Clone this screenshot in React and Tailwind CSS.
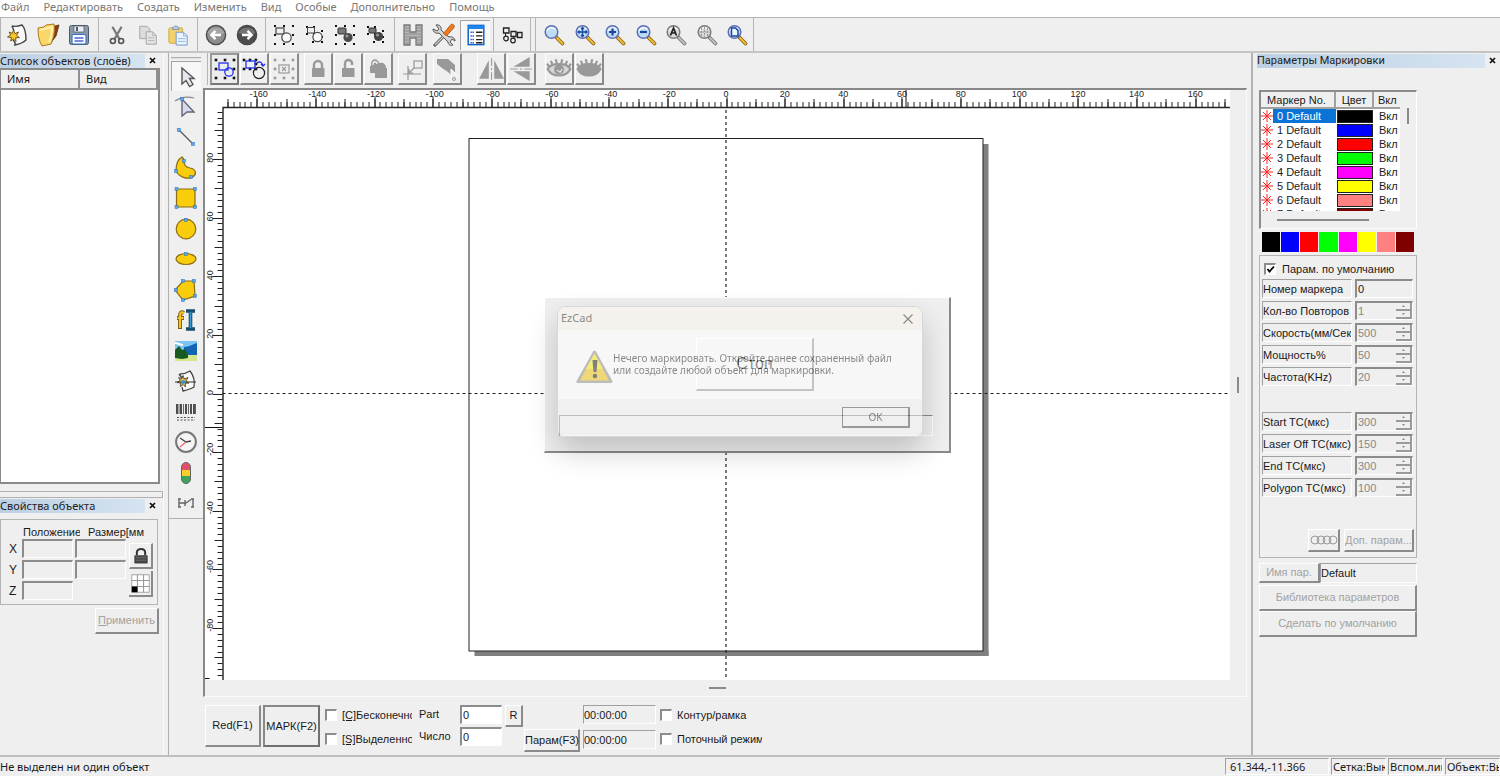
import React from "react";

const sans = "font-['Liberation_Sans','Noto_Sans',sans-serif]";
const ui = "font-['Noto_Sans','Open_Sans',sans-serif]";
const raised = "border-t border-l border-t-white border-l-white border-b-2 border-r-2 border-b-[#8a8a8a] border-r-[#8a8a8a] bg-[#efefef]";
const sunken = "border-t-2 border-l-2 border-t-[#8c8c8c] border-l-[#8c8c8c] border-b border-r border-b-white border-r-white";
const thin = "border-t border-l border-t-[#a0a0a0] border-l-[#a0a0a0] border-b border-r border-b-white border-r-white";

function Svg({ size = 24, children }) {
  return (
    <svg width={size} height={size} viewBox="0 0 24 24" fill="none" aria-hidden="true">
      {children}
    </svg>
  );
}

/* ---------- main toolbar icons ---------- */
const STAR = "M0-6 1.4-2.4 5-4 3-.6 6 1.6 2.2 1.8 2.4 5.4 0 3-2.8 5-2 1.6-6 1-2.8-1-4.4-4-1.2-2.6Z";
const NewIcon = () => (
  <Svg>
    <path d="M7 3C11 4 14 3 17 2c3 3 4 8 4 15-2 2-6 4-11 5 1-3-1-4-2-5" fill="#fafafa" stroke="#444" strokeWidth="1.4" />
    <path d="M7 3 9 8" stroke="#444" strokeWidth="1.4" />
    <path transform="translate(8.5 13)" d={STAR} fill="#f7c52b" stroke="#6b4a0a" strokeWidth=".9" />
  </Svg>
);
const OpenIcon = () => (
  <Svg>
    <path d="M15 4 23 2 20 13 14 21Z" fill="#8a3f12" stroke="#5b2a0c" strokeWidth=".8" />
    <path d="M2 5 8 4 10 2 18 1c1 5 0 13-3 20L6 23C3 18 2 12 2 5Z" fill="#fbd76b" stroke="#a87b1c" strokeWidth="1" />
    <path d="M4 7 16 4C16 10 15 15 13 19" stroke="#fff0b0" strokeWidth="2" />
  </Svg>
);
const SaveIcon = () => (
  <Svg>
    <rect x="2.5" y="2.5" width="19" height="19" rx="2" fill="#8b98a8" stroke="#4d5966" />
    <rect x="7" y="3" width="10" height="6" fill="#e8eef4" stroke="#4d5966" strokeWidth=".7" />
    <rect x="9" y="4" width="2" height="4" fill="#4d5966" />
    <rect x="5" y="11.500" width="14" height="9.500" rx="1" fill="#fff" stroke="#3377cc" strokeWidth="1.200" />
    <path d="M7.500 15h9M7.500 18h9" stroke="#4a64e0" strokeWidth="1.300" />
  </Svg>
);
const CutIcon = () => (
  <Svg size={22}>
    <path d="M7 3 15 17M17 3 9 17" stroke="#777" strokeWidth="2.400" />
    <circle cx="7.500" cy="18.500" r="2.700" stroke="#555" strokeWidth="1.800" />
    <circle cx="16.500" cy="18.500" r="2.700" stroke="#555" strokeWidth="1.800" />
  </Svg>
);
const CopyIcon = () => (
  <Svg size={22}>
    <path d="M3 2.500h8l3 3V16H3Z" fill="#dcdcdc" stroke="#a2a2a2" />
    <path d="M10 8.500h7l4 4V22H10Z" fill="#e4e4e4" stroke="#a2a2a2" />
    <path d="M17 8.500v4h4M12 15h7M12 18h7" stroke="#b5b5b5" />
  </Svg>
);
const PasteIcon = () => (
  <Svg size={22}>
    <rect x="2" y="4" width="15" height="17" rx="2" fill="#f3d26c" stroke="#c9a63c" />
    <path d="M6 6c0-5 7-5 7 0Z" fill="#b9cde6" stroke="#7b93b5" />
    <path d="M10 9h8l4 4v10H10Z" fill="#eaf3fc" stroke="#6a93c4" />
    <path d="M18 9v4h4M12 16h8M12 19h8" stroke="#8fb3dc" />
  </Svg>
);
const Arrow = ({ right }) => (
  <Svg>
    <circle cx="12" cy="12" r="9.600" fill={right ? "#4c4c4c" : "#8e8e8e"} stroke="#4a4a4a" strokeWidth="1.400" />
    <path d="M3.500 10a9 8 0 0 1 17 0c-5 2-12 2-17 0Z" fill="#fff" opacity=".22" />
    <path d={right ? "M7 12h9M12.500 7.800 16.700 12l-4.200 4.200" : "M17 12H8M11.500 7.800 7.300 12l4.200 4.200"} stroke="#fff" strokeWidth="2.400" />
  </Svg>
);
const DOTS8 = [[3, 3], [12, 3], [21, 3], [3, 12], [21, 12], [3, 21], [12, 21], [21, 21]];
const Dots = ({ pts = DOTS8, c = "#111", s = 2 }) =>
  pts.map(([x, y]) => <rect key={x + "-" + y} x={x - s / 2} y={y - s / 2} width={s} height={s} fill={c} />);
const GroupIcon = () => (
  <Svg>
    <Dots />
    <rect x="4" y="5" width="8" height="6" stroke="#444" strokeWidth="1.200" />
    <circle cx="14.500" cy="14.500" r="4.700" fill="#fafafa" stroke="#444" strokeWidth="1.200" />
  </Svg>
);
const INNER = [[4, 4], [11, 4], [4, 11], [11, 11], [19, 8], [19, 19], [10, 19], [19, 14]];
const UngroupIcon = () => (
  <Svg>
    <Dots pts={INNER} />
    <rect x="4.500" y="4.500" width="7" height="5.500" stroke="#444" />
    <circle cx="14.500" cy="14" r="4.600" fill="#fafafa" stroke="#444" strokeWidth="1.200" />
  </Svg>
);
const CombineIcon = () => (
  <Svg>
    <Dots />
    <rect x="5" y="5" width="8" height="6" rx="1" fill="#777" stroke="#333" />
    <circle cx="15" cy="14.500" r="4.600" fill="#4a4a4a" />
    <circle cx="14" cy="13" r="1.500" fill="#999" />
  </Svg>
);
const UncombineIcon = () => (
  <Svg>
    <Dots pts={INNER} />
    <rect x="5" y="5" width="7" height="5" rx="1" fill="#777" stroke="#333" />
    <circle cx="14.500" cy="13.500" r="4.600" fill="#444" />
    <circle cx="13.500" cy="12" r="1.500" fill="#999" />
  </Svg>
);
const HatchIcon = () => (
  <Svg>
    <path d="M3 2h6v7h6V2h6v20h-6v-7H9v7H3Z" fill="#b5b5b5" stroke="#777" strokeWidth="1.300" />
    <path d="M3 5h6M3 8h6M3 11h18M3 14h18M3 17h6M3 20h6M15 5h6M15 8h6M15 17h6M15 20h6" stroke="#8d8d8d" />
  </Svg>
);
const ToolsIcon = () => (
  <Svg>
    <path d="M4 2 7 6 5 8 1 6c0 3 3 5 6 4l9 9c0 3 3 4 5 3l-3-3 2-3 3 2c0-3-3-5-6-4L9 7c1-3-2-6-5-5Z" fill="#d4d4d4" stroke="#555" strokeWidth="1" />
    <path d="M11 14 2 23" stroke="#555" strokeWidth="3" />
    <path d="M11 14 3 22" stroke="#ccc" strokeWidth="1.200" />
    <path d="M11.500 10.500 19 1.500c2-1 4 1 3 3L14.500 13Z" fill="#f07c1e" stroke="#a8480c" strokeWidth=".8" />
  </Svg>
);
const ListIcon = () => (
  <Svg size={22}>
    <rect x="3.500" y="1.500" width="17" height="21" fill="#fff" stroke="#0b62c4" strokeWidth="1.600" />
    <rect x="3.500" y="1.500" width="17" height="4" fill="#1d86ea" />
    <path d="M6 9h4M6 13h4M6 17h4M6 20.500h4" stroke="#3344cc" strokeWidth="1.600" strokeDasharray="1.500 .7" />
    <path d="M12 9h7M12 13h7M12 17h7M12 20.500h7" stroke="#222" strokeWidth="1.500" />
  </Svg>
);
const NodesIcon = () => (
  <Svg>
    <path d="M3.500 5h5.500v5H3.500Z M11 8.500h5v5h-5Z M17.500 9.500h4.500v5h-4.500Z" stroke="#222" strokeWidth="1.300" />
    <circle cx="6" cy="15.500" r="2.300" stroke="#222" strokeWidth="1.200" />
    <circle cx="13" cy="17.500" r="2.300" stroke="#222" strokeWidth="1.200" />
    <path d="M5.500 10v3M14 13.500v1.500" stroke="#222" />
  </Svg>
);
const Lens = ({ gray, children }) => (
  <Svg>
    <path d="M14.500 14.500 20.500 20.500" stroke={gray ? "#777" : "#8a6412"} strokeWidth="3.800" strokeLinecap="round" />
    <path d="M15 15 20.500 20.500" stroke={gray ? "#bdbdbd" : "#efb83a"} strokeWidth="2.100" strokeLinecap="round" />
    <circle cx="9.500" cy="9" r="6.300" fill={gray ? "#d9d9d9" : "#bfdcf6"} stroke={gray ? "#7c7c7c" : "#5f6fb5"} strokeWidth="1.500" />
    <path d="M5 8a5 5 0 0 1 8.500-1.500" stroke="#fff" strokeWidth="1.400" opacity=".8" />
    {children}
  </Svg>
);
const ZOOMS = [
  ["Лупа", <Lens key="a" />],
  ["Сдвиг", <Lens key="b"><path d="M9.500 4.500v9M5 9h9M8 6 9.500 4.500 11 6M8 12 9.500 13.500 11 12M6.500 7.500 5 9l1.500 1.500M12.500 7.500 14 9l-1.500 1.500" stroke="#17479c" strokeWidth="1.300" /></Lens>],
  ["Увеличить", <Lens key="c"><path d="M9.500 5.500v7M6 9h7" stroke="#17479c" strokeWidth="2.200" /></Lens>],
  ["Уменьшить", <Lens key="d"><path d="M6 9h7" stroke="#17479c" strokeWidth="2.200" /></Lens>],
  ["Показать всё", <Lens key="e" gray><path d="M6.500 12.500 9.500 5l3 7.500M7.500 10h4" stroke="#222" strokeWidth="1.700" /></Lens>],
  ["Показать выделенное", <Lens key="f" gray><path d="M9.500 4v10M4.500 9h10M6.500 5v8M12.500 5v8" stroke="#999" strokeWidth="1" strokeDasharray="2 1" /></Lens>],
  ["Показать страницу", <Lens key="g"><path d="M6.500 5h4l2.500 2.500V13H6.500Z" fill="#eef6ff" stroke="#17479c" strokeWidth="1.500" /></Lens>],
];

/* ---------- object toolbar icons ---------- */
const BlueSel = () => (
  <Svg>
    <Dots s={2.600} />
    <rect x="6" y="6" width="9" height="7" stroke="#2030f0" strokeWidth="1.300" />
    <circle cx="16" cy="15" r="4.200" stroke="#2030f0" strokeWidth="1.300" />
  </Svg>
);
const BlueRot = () => (
  <Svg>
    <Dots s={2.600} pts={[[2, 3], [8, 3], [14, 3], [2, 12], [8, 12], [14, 12], [14, 7]]} />
    <rect x="4" y="4" width="9" height="7" stroke="#2030f0" strokeWidth="1.300" />
    <circle cx="17" cy="16" r="5.600" stroke="#222" strokeWidth="1.200" />
    <path d="M15 6c3-2 5-1 6 3M19 7l2 2 2-2" stroke="#2030f0" strokeWidth="1.300" />
  </Svg>
);
const GreySel = () => (
  <Svg>
    <Dots s={2.600} c="#999" />
    <rect x="7" y="8" width="10" height="8" stroke="#999" strokeWidth="1.200" />
    <path d="m10 10 4 4m0-4-4 4" stroke="#999" strokeWidth="1.200" />
  </Svg>
);
const LockG = ({ d = "M8 11V8a4 4 0 0 1 8 0v3" }) => (
  <Svg>
    <path d={d} stroke="#999" strokeWidth="2.400" />
    <rect x="6" y="11" width="12.500" height="9" fill="#999" />
  </Svg>
);
const LocksG = () => (
  <Svg>
    <path d="M4 9h1V7c0-6 7-6 8-1 4-1 7 1 7 5h1v10H9v-5H4Z" fill="#999" />
    <path d="M7 8V7c0-3 4-3 4 0" stroke="#efefef" strokeWidth="1.300" />
  </Svg>
);
const OriginIcon = () => (
  <Svg>
    <path d="M3 17h18M8 9v14M9 16l5-5M9 12v4h4" stroke="#999" strokeWidth="1.200" />
    <rect x="14" y="4" width="8" height="7" stroke="#999" strokeWidth="1.200" />
  </Svg>
);
const PolyG = () => (
  <Svg>
    <path d="M2 2h11l7 6v8l-4-4v6l-3-3-6-4-5-4Z" fill="#999" />
    <path d="M16 12v11m0-11 8 8" stroke="#fff" />
    <circle cx="19" cy="22" r="1.500" stroke="#999" />
  </Svg>
);
const MirrorH = () => (
  <Svg size={26}><path d="M10 4v17H1Z M15 4v17h9Z" fill="#999" /><path d="M12.500 2v20" stroke="#999" strokeDasharray="7 2 2 2" /></Svg>
);
const MirrorV = () => (
  <Svg size={26}><path d="M20 1v9H5Z M20 23v-9H5Z" fill="#999" /><path d="M2 12h20" stroke="#999" strokeDasharray="7 2 2 2" /></Svg>
);
const Eye = ({ closed }) => (
  <Svg size={26}>
    <path d="M1.500 12c3-6 18-6 21 0-4 8-17 8-21 0Z" fill={closed ? "#999" : "#d6d6d6"} stroke="#999" strokeWidth="2" />
    <path d="M3 10 1 7M6 8 4.500 4.500M10 7 9 3M14 7l1-4M18 8l1.500-3.500M21 10l2-3" stroke="#999" strokeWidth="2" />
    {!closed && <circle cx="12" cy="12.500" r="4.600" fill="#999" />}
    {!closed && <path d="M10 13l3 2 2-3" stroke="#efefef" />}
  </Svg>
);

/* ---------- drawing tools ---------- */
const Pt = ({ x, y }) => <rect x={x - 1.500} y={y - 1.500} width="3" height="3" fill="#5aa9f0" stroke="#2b6fc0" strokeWidth=".5" />;
const TOOLS = [
  ["Выбор", <Svg key="1"><path d="M7 3v16l4-3.500 3.500 6 3.500-2-3.500-6H19Z" fill="#e6e8f0" stroke="#555" strokeWidth="1.400" /></Svg>],
  ["Узлы", <Svg key="2"><path d="M1 6C7 2 13 1 20 3" stroke="#888" strokeWidth="1.200" /><path d="M8 4v17l5-4h7Z" fill="#d5daf0" stroke="#667" strokeWidth="1.400" /><Pt x={8} y={4} /></Svg>],
  ["Линия", <Svg key="3"><path d="m5 5 14 14" stroke="#555" strokeWidth="1.300" /><Pt x={5} y={5} /><Pt x={19} y={19} /></Svg>],
  ["Кривая", <Svg key="4"><path d="M8 1C4 3 2 9 2 15c3 6 11 9 17 6 4-3 3-8-3-9-5-1-6-3-6-6 0-2 0-4-2-5Z" fill="#f9cd0c" stroke="#8a6c12" strokeWidth="1.200" /><Pt x={10} y={5} /><Pt x={2} y={15} /><Pt x={17} y={21} /></Svg>],
  ["Прямоугольник", <Svg key="5"><path d="M2.500 3h18.500v18H2.500Z" fill="#f9cd0c" stroke="#8a6c12" strokeWidth="1.200" /><Pt x={2.500} y={3} /><Pt x={21} y={3} /><Pt x={2.500} y={21} /><Pt x={21} y={21} /></Svg>],
  ["Окружность", <Svg key="6"><circle cx="12" cy="12" r="9.800" fill="#f9cd0c" stroke="#8a6c12" strokeWidth="1.200" /><Pt x={12} y={3} /></Svg>],
  ["Эллипс", <Svg key="7"><ellipse cx="12" cy="12" rx="10" ry="5.500" fill="#f9cd0c" stroke="#8a6c12" strokeWidth="1.200" /><Pt x={12} y={7} /></Svg>],
  ["Многоугольник", <Svg key="8"><path d="M9 3h11l1 15-12 4-8-10Z" fill="#f9cd0c" stroke="#8a6c12" strokeWidth="1.200" /><Pt x={9} y={3} /><Pt x={20} y={3} /><Pt x={21} y={18} /><Pt x={9} y={22} /><Pt x={2} y={12} /></Svg>],
  ["Текст", <Svg key="9"><path d="M10 5C6 3 6 6 6 9v12M3 10h7" stroke="#7a5d10" strokeWidth="4" /><path d="M10 5C6 3 6 6 6 9v11M3.500 10h6" stroke="#f5c51e" strokeWidth="2.200" /><path d="M12 3h9M12 21h9M16.500 3v18" stroke="#174d6e" strokeWidth="3.600" /><path d="M16.500 4v16" stroke="#3a9bd0" strokeWidth="1.600" /></Svg>],
  ["Растр", <Svg key="10"><path d="M1 2h22v20H1Z" fill="#7cc4f4" /><path d="M10 8c5 0 9-3 13-4v12H10Z" fill="#1464b4" /><path d="M1 4c3 0 5 2 8 2" stroke="#fff" strokeWidth="2" /><path d="M8 16h15v6H1v-4Z" fill="#d3e88c" /><path d="M1 11 5 7l3 4 3-1 3 6v3l-6 1-7-1Z" fill="#17591f" /></Svg>],
  ["Вектор", <Svg key="11"><path d="M6 5C10 5 13 4 16 2c4 5 5 10 4 16-3 2-7 3-11 4l-1-4" fill="#fafafa" stroke="#444" strokeWidth="1.300" /><path d="M5 5 8 9" stroke="#444" strokeWidth="1.400" /><path transform="translate(9 12.500)" d={STAR} fill="#f2c230" stroke="#444" strokeWidth=".9" /><path d="M1 13h21" stroke="#333" /><circle cx="9" cy="13" r="2" fill="#3d8fd6" /></Svg>],
  ["Штрихкод", <Svg key="12"><path d="M3 4v10M7 4v10M12 4v10M17 4v10M20 4v10" stroke="#333" strokeWidth="1.700" /><path d="M5 4v10M9.500 4v10M14.500 4v10M21.500 4v10" stroke="#555" strokeWidth=".9" /><path d="M3 17.500h18M3 20h18" stroke="#555" strokeWidth="1.200" strokeDasharray="2 1.500" /></Svg>],
  ["Таймер", <Svg key="13"><circle cx="12" cy="12" r="9.900" fill="#f5f5f5" stroke="#777" strokeWidth="2" /><path d="M6 8 12 12l5-1" stroke="#444" strokeWidth="1.300" /><path d="M12 12 6 17" stroke="#e66" strokeWidth="1.100" /></Svg>],
  ["Порты", <Svg key="14"><rect x="7.500" y="1.500" width="9" height="21" rx="4.500" fill="#3da35a" stroke="#666" /><path d="M8 9V6a4 4 0 0 1 8 0v3Z" fill="#e0506c" /><rect x="8" y="9" width="8" height="6" fill="#f8cf2a" /></Svg>],
  ["Энкодер", <Svg key="15"><path d="M5 8v8M4 8h3M4 16h3M19 8v8M17 8h3M17 16h3M5 12h7M11 9v6M12 12l5-3.500" stroke="#666" strokeWidth="1.400" /></Svg>],
];

function ToolButton({ label, on, children }) {
  return (
    <button type="button" aria-label={label} className={`flex h-[30px] w-[30px] shrink-0 items-center justify-center ${on ? "border-t border-l border-[#a5a5a5] border-b-white border-r-white bg-[#f7f7f7]" : ""}`}>
      {children}
    </button>
  );
}

const MAIN_GROUPS = [
  ["w-[98px] pl-px pr-1", [["Новый", <NewIcon key="i" />], ["Открыть", <OpenIcon key="i" />], ["Сохранить", <SaveIcon key="i" />]]],
  ["w-[99px] pl-[3px] pr-1", [["Вырезать", <CutIcon key="i" />], ["Копировать", <CopyIcon key="i" />], ["Вставить", <PasteIcon key="i" />]]],
  ["w-[68px] px-[3px]", [["Отменить", <Arrow key="i" />], ["Вернуть", <Arrow key="i" right />]]],
  ["w-[129px] px-[3px]", [["Объединить", <GroupIcon key="i" />], ["Разъединить", <UngroupIcon key="i" />], ["Группировать", <CombineIcon key="i" />], ["Разгруппировать", <UncombineIcon key="i" />]]],
  ["w-[99px] px-[3px]", [["Штриховка", <HatchIcon key="i" />], ["Настройки", <ToolsIcon key="i" />], ["Список", <ListIcon key="i" />]]],
  ["w-[37px] px-[3px]", [["Схема", <NodesIcon key="i" />]]],
  ["w-[5px]", []],
  ["w-[218px] pl-[3px] pr-px", ZOOMS],
];

function MainToolbar() {
  return (
    <div className="flex h-9 shrink-0 border-t border-b-2 border-t-[#b5b5b5] border-b-[#c4c4c4]">
      {MAIN_GROUPS.map(([box, items], i) => (
        <div key={i} className={`flex items-center justify-between border-l border-[#b4b4b4] ${box}`}>
          {items.map(([label, icon]) => (
            <ToolButton key={label} label={label} on={label === "Список"}>{icon}</ToolButton>
          ))}
        </div>
      ))}
      <div className="border-l border-[#b4b4b4]" />
    </div>
  );
}

const OBJ_GROUPS = [
  ["", [<BlueSel key="a" />, <BlueRot key="b" />, <GreySel key="c" />]],
  ["ml-[5px]", [<LockG key="a" />, <LockG key="b" d="M9 11V7a3.500 3.500 0 0 1 7-1v2" />, <LocksG key="c" />]],
  ["ml-[5px]", [<OriginIcon key="a" />]],
  ["ml-[6px]", [<PolyG key="a" />]],
  ["ml-[15px]", [<MirrorH key="a" />, <MirrorV key="b" />]],
  ["ml-[9px]", [<Eye key="a" />, <Eye key="b" closed />]],
];

function ObjectToolbar() {
  return (
    <div className="flex h-[35px] shrink-0 items-start">
      <div className="mr-[2px] ml-1 h-8 w-px bg-[#b4b4b4]" />
      {OBJ_GROUPS.map(([m, icons], i) => (
        <div key={i} className={`flex gap-px ${m}`}>
          {icons.map((icon, j) => (
            <button key={j} type="button" aria-label={`Команда ${i + 1}.${j + 1}`} className={`flex h-8 w-[29px] items-center justify-center overflow-hidden ${i === 0 && j === 0 ? "border-2 border-[#777] border-t-[#999] border-l-[#999] bg-[#ececec]" : raised}`}>
              {icon}
            </button>
          ))}
        </div>
      ))}
    </div>
  );
}

function Title({ children, face = ui }) {
  return (
    <div className="flex h-[15px] items-center">
      <h2 className={`${face} flex-1 bg-linear-to-r from-[#bccfe3] to-[#d6e4f1] text-[11px] leading-[14px] whitespace-nowrap text-[#222]`}>{children}</h2>
      <button type="button" aria-label="Закрыть панель" className="flex w-[15px] justify-center">
        <svg width="7" height="7" viewBox="0 0 7 7" aria-hidden="true"><path d="m1 1 5 5M6 1 1 6" stroke="#111" strokeWidth="1.700" /></svg>
      </button>
    </div>
  );
}

function Field({ label, value = "", className, disabled }) {
  return <input aria-label={label} defaultValue={value} disabled={disabled} className={`min-w-0 ${className}`} />;
}

function LeftPanel() {
  return (
    <aside className="flex w-[164px] shrink-0 flex-col border-r border-[#fafafa]">
      <div className="pr-[3px]"><Title>Список объектов (слоёв)</Title></div>
      <div className="mr-[3px] flex h-[416px] shrink-0 flex-col border-t-2 border-r-2 border-b-2 border-l border-[#8a8a8a] bg-white">
        <table className={`${ui} w-full table-fixed text-left text-[11px] leading-[18px]`}>
          <thead>
            <tr className="bg-[#efefef]">
              <th className="w-1/2 border-r-2 border-b-2 border-[#909090] pl-1.5 font-normal">Имя</th>
              <th className="border-r-2 border-b-2 border-[#909090] pl-1.5 font-normal">Вид</th>
            </tr>
          </thead>
        </table>
      </div>
      <div className="mt-[7px] h-[7px] shrink-0 border-t border-r border-b border-[#b0b0b0]" />
      <div className="pr-[3px]"><Title>Свойства объекта</Title></div>
      <section className="mt-[6px] mr-[5px] h-[86px] border border-[#b4b4b4] pt-[5px] pl-2">
        <div className="flex text-[11px] leading-[14px]">
          <span className="ml-[14px] w-[57px] overflow-hidden whitespace-nowrap">Положение</span>
          <span className="ml-2 whitespace-nowrap">Размер[мм</span>
        </div>
        <div className="flex gap-[3px]">
          <div className="grid grid-cols-[11px_51px_51px] gap-x-[2px] gap-y-[2px] text-xs leading-[18px]">
            <span className="pt-px">X</span><Field label="Положение X" className={`h-[19px] ${sunken}`} /><Field label="Размер X" className={`h-[19px] ${sunken}`} />
            <span className="pt-px">Y</span><Field label="Положение Y" className={`h-[19px] ${sunken}`} /><Field label="Размер Y" className={`h-[19px] ${sunken}`} />
            <span className="pt-px">Z</span><Field label="Положение Z" className={`h-[19px] ${sunken}`} />
          </div>
          <div className="flex flex-col gap-[2px] pt-1">
            <button type="button" aria-label="Пропорции" className={`flex h-[26px] w-6 items-center justify-center ${raised}`}>
              <Svg size={20}><path d="M7 11V8c0-6 10-6 10 0v3" stroke="#333" strokeWidth="2.400" /><rect x="4" y="11" width="16" height="10" rx="1" fill="#444" /><path d="M6 14h12M6 17h12" stroke="#777" /></Svg>
            </button>
            <button type="button" aria-label="Базовая точка" className="flex h-[26px] w-6 items-center justify-center border-r-2 border-b-2 border-[#8a8a8a]">
              <Svg size={21}><path d="M2 2h20v20H2Z" fill="#fff" stroke="#999" /><path d="M8.500 2v20M15.500 2v20M2 8.500h20M2 15.500h20" stroke="#999" strokeWidth="1.200" /><rect x="2" y="15.500" width="6.500" height="6.500" fill="#000" /></Svg>
            </button>
          </div>
        </div>
      </section>
      <button type="button" disabled className={`mt-[3px] mr-1 h-[26px] w-16 self-end text-[11px] text-[#a2a2a2] ${raised}`}><u>П</u>рименить</button>
    </aside>
  );
}

function ToolColumn() {
  return (
    <nav aria-label="Инструменты" className="w-[35px] shrink-0 border-l border-[#b0b0b0]">
      <div className="flex h-[466px] flex-col items-center border-b border-[#b0b0b0] pt-1">
        <div className="mb-[2px] h-[2px] w-[30px] shrink-0 border-t border-b border-t-[#b0b0b0] border-b-[#ddd]" />
        <div className="flex h-[457px] flex-col justify-between">
          {TOOLS.map(([label, icon], i) => (
            <ToolButton key={label} label={label} on={i === 0}>{icon}</ToolButton>
          ))}
        </div>
      </div>
    </nav>
  );
}

/* Work field: 1 mm = 2.933 px, origin at (CX, CY) */
const CX = 520.5;
const CY = 303.5;
const MM = 2.933;
function Canvas() {
  const h = [];
  for (let v = -170; v <= 170; v += 2) h.push(v);
  const w = [];
  for (let v = -96; v <= 96; v += 2) w.push(v);
  const tick = (v) => (v % 20 === 0 ? 10 : 5);
  const tens = [];
  for (let v = -17; v <= 17; v++) tens.push(v * 10);
  const labelsX = [];
  for (let v = -160; v <= 160; v += 20) labelsX.push(v);
  const labelsY = [80, 60, 40, 20, 0, -20, -40, -60, -80];
  return (
    <svg className="min-h-0 min-w-0 flex-1 bg-white font-['Liberation_Sans',sans-serif]" viewBox="-1 0 1026 590" preserveAspectRatio="xMidYMid slice" role="img" aria-label="Рабочее поле">
      <rect x="269" y="560" width="514" height="6" fill="#808080" />
      <rect x="777" y="54" width="6" height="512" fill="#808080" />
      <rect x="263.500" y="48.500" width="514" height="512.500" fill="#fff" stroke="#222" />
      <path d={`M17 ${CY}H1025M${CX} 20V590`} stroke="#222" strokeDasharray="3 3" strokeWidth="1.200" />
      <path d="M17.500 590V17.500H1025" stroke="#222" strokeWidth="1.400" fill="none" />
      <path d={h.map((v) => `M${Math.round(CX + v * MM) + 0.5} 17v-${tick(v)}`).join("") + tens.map((v) => `M${Math.round(CX + v * MM) + 0.5} 17v-8`).join("")} stroke="#222" />
      <path d={w.map((v) => `M17 ${Math.round(CY - v * MM) + 0.5}h-${tick(v)}`).join("") + tens.filter((v) => Math.abs(v) < 97).map((v) => `M17 ${Math.round(CY - v * MM) + 0.5}h-8`).join("")} stroke="#222" />
      <path d="M700.500 0v17M-1 337.500h18M-1 588.500h5" stroke="#111" />
      <g fontSize="9" fill="#222" textAnchor="middle">
        {labelsX.map((v) => <text key={v} x={CX + v * MM + (v < 0 ? 2 : 0)} y="7">{v}</text>)}
        {labelsY.map((v) => <text key={v} transform={`translate(7 ${CY - v * MM - (v < 0 ? 3 : 1)}) rotate(-90)`}>{v}</text>)}
      </g>
    </svg>
  );
}

function Dialogs() {
  return (
    <div className={`absolute top-[207px] left-[339px] h-[156px] w-[407px] ${raised}`}>
      <div className="flex h-full flex-col items-center">
        <button type="button" className={`mt-10 ml-4 h-[53px] w-[118px] shrink-0 text-base ${raised}`}>Стоп</button>
        <div className="mt-6 mr-4 ml-[14px] h-[21px] self-stretch border border-[#8a8a8a] border-r-white border-b-white" />
      </div>
      <div className="pointer-events-none absolute top-2 left-3 h-[131px] w-[366px] rounded-lg shadow-[0_14px_30px_rgba(0,0,0,0.2)]" />
      <div role="dialog" aria-label="EzCad" className={`absolute top-2 left-3 flex h-[131px] w-[366px] flex-col overflow-hidden rounded-lg border border-[#c0c0c0] bg-white opacity-50 ${ui} text-[11px]`}>
        <div className="flex h-[23px] shrink-0 items-center justify-between bg-[#fbf2e9] pr-2 pl-[3px]">
          <span>EzCad</span>
          <button type="button" aria-label="Закрыть"><svg width="12" height="12" viewBox="0 0 12 12" aria-hidden="true"><path d="m1.500 1.500 9 9M10.500 1.500l-9 9" stroke="#222" strokeWidth="1.200" /></svg></button>
        </div>
        <div className="flex flex-1 items-center pt-[5px] pl-[18px]">
          <svg width="37" height="34" viewBox="0 0 37 34" className="shrink-0" aria-hidden="true">
            <path d="M18.500 2 2 31.500h33Z" fill="#888" stroke="#888" strokeWidth="3" strokeLinejoin="round" />
            <path d="M18.500 3.500 4 30.500h29Z" fill="#f0c000" />
            <path d="M18.500 3.500 10 19h17Z" fill="#f5e800" />
            <path d="M16.500 10h5l-1 12h-3Z" fill="#111" />
            <circle cx="19" cy="26" r="2.300" fill="#111" />
          </svg>
          <p className="pb-[6px] text-[10px] leading-3 whitespace-nowrap">Нечего маркировать. Откройте ранее сохраненный файл<br />или создайте любой объект для маркировки.</p>
        </div>
        <div className="flex h-[37px] shrink-0 justify-end bg-[#f0f0f0] pt-2 pr-3">
          <button type="button" className="h-[21px] w-[68px] border border-[#444] border-r-2 border-b-2 text-[10px]">OK</button>
        </div>
      </div>
    </div>
  );
}

function Check({ label, children, className = "" }) {
  return (
    <label className={`flex h-[14px] items-center gap-[5px] overflow-hidden leading-[14px] whitespace-nowrap ${className}`}>
      <input type="checkbox" aria-label={label} className={`h-3 w-3 shrink-0 appearance-none bg-white ${sunken}`} />
      <span>{children}</span>
    </label>
  );
}

function MarkPanel() {
  return (
    <div className="flex h-[58px] shrink-0 items-start pt-2 pl-[2px]">
      <button type="button" className={`h-[42px] w-14 ${raised}`}>Red(F1)</button>
      <button type="button" className="ml-[2px] h-[42px] w-[57px] border-2 border-[#707070] border-t-[#888] border-l-[#888] whitespace-nowrap">МАРК(F2)</button>
      <div className="ml-[5px] flex w-[87px] flex-col gap-[10px] pt-[3px]">
        <Check label="Бесконечно"><u>[C]</u>Бесконечно</Check>
        <Check label="Выделенное"><u>[S]</u>Выделенно</Check>
      </div>
      <div className="ml-[7px] grid grid-cols-[41px_42px] gap-y-[3px] leading-[19px]">
        <label htmlFor="part">Part</label>
        <input id="part" defaultValue="0" className={`h-[19px] w-full bg-white pl-px ${sunken}`} />
        <label htmlFor="count">Число</label>
        <input id="count" defaultValue="0" className={`h-[19px] w-full bg-white pl-px ${sunken}`} />
      </div>
      <button type="button" className={`ml-[3px] h-[22px] w-[18px] ${raised}`}>R</button>
      <button type="button" className={`mt-6 ml-px h-[23px] w-14 whitespace-nowrap ${raised}`}>Парам(F3)</button>
      <div className="ml-[3px] flex flex-col gap-[6px]">
        <input aria-label="Время" readOnly value="00:00:00" className={`h-[19px] w-[73px] ${thin}`} />
        <input aria-label="Общее время" readOnly value="00:00:00" className={`h-[19px] w-[73px] ${thin}`} />
      </div>
      <div className="ml-1 flex w-[102px] flex-col gap-[10px] pt-[3px]">
        <Check label="Контур/рамка">Контур/рамка</Check>
        <Check label="Поточный режим">Поточный режим</Check>
      </div>
    </div>
  );
}

const PENS = [
  ["0 Default", "bg-[#000000]"], ["1 Default", "bg-[#0000ff]"], ["2 Default", "bg-[#ff0000]"], ["3 Default", "bg-[#00ff00]"],
  ["4 Default", "bg-[#ff00ff]"], ["5 Default", "bg-[#ffff00]"], ["6 Default", "bg-[#ff8080]"], ["7 Default", "bg-[#800000]"],
];

function Param({ label, value, spin = true }) {
  return (
    <label className="flex h-[19px] gap-[3px]">
      <span className={`w-[90px] overflow-hidden leading-[18px] whitespace-nowrap ${thin}`}>{label}</span>
      <span className={`flex w-[58px] ${sunken}`}>
        <input defaultValue={value} disabled={spin} className="w-0 min-w-0 flex-1 pl-px disabled:text-[#888]" />
        {spin && (
          <span className="flex w-4 flex-col">
            {[0, 1].map((k) => (
              <span key={k} className="flex h-2 items-center justify-center border-r-2 border-b-2 border-[#9a9a9a]">
                <svg width="5" height="3" viewBox="0 0 5 3" aria-hidden="true"><path d={k ? "M1 0h3L2.500 2Z" : "M1 2h3L2.500 0Z"} fill="#888" /></svg>
              </span>
            ))}
          </span>
        )}
      </span>
    </label>
  );
}

function RightPanel() {
  return (
    <aside className="w-[249px] shrink-0 border-l-2 border-[#b4b4b4] pl-1">
      <Title face="font-['Roboto','Noto_Sans',sans-serif]">Параметры Маркировки</Title>
      <div className="ml-[2px] w-[158px]">
        <div className={`mt-[22px] flex h-[139px] ${sunken}`}>
          <div className="w-[139px]">
            <div className="h-[119px] overflow-hidden bg-white">
              <table className="w-full table-fixed border-separate border-spacing-0 text-left leading-[14px]">
                <colgroup>
                  <col className="w-3" />
                  <col className="w-[63px]" />
                  <col className="w-[38px]" />
                  <col className="w-[26px]" />
                </colgroup>
                <thead>
                  <tr className="h-[17px] bg-[#efefef]">
                    <th colSpan="2" className="border-r-2 border-b-2 border-[#a0a0a0] p-0 pl-1.5 font-normal">Маркер No.</th>
                    <th className="border-r-2 border-b-2 border-[#a0a0a0] p-0 text-center font-normal">Цвет</th>
                    <th className="border-b-2 border-[#a0a0a0] p-0 pl-1 font-normal">Вкл</th>
                  </tr>
                </thead>
                <tbody>
                  {PENS.map(([name, color], i) => (
                    <tr key={name} className="h-[14px]">
                      <td className="p-0">
                        <svg width="12" height="12" viewBox="0 0 12 12" aria-hidden="true"><path d="M6 0v12M0 6h12M2 2l8 8M10 2l-8 8" stroke="#f22" /></svg>
                      </td>
                      <td className={`p-0 pl-1 whitespace-nowrap ${i === 0 ? "bg-[#0a74d6] text-white" : ""}`}>{name}</td>
                      <td className="p-0 pl-px"><div className={`mr-px h-[13px] border border-[#222] ${color}`} /></td>
                      <td className="p-0 pl-[5px]">Вкл</td>
                    </tr>
                  ))}
                </tbody>
              </table>
            </div>
            <div className="mt-2 ml-4 h-[2px] w-[92px] bg-[#8a8a8a]" />
          </div>
          <div className="mt-4 ml-[7px] h-4 w-[2px] bg-[#8a8a8a]" />
        </div>
        <div className="mt-[3px] flex h-5 gap-px px-[3px]">
          {PENS.map(([name, color]) => <button key={name} type="button" aria-label={`Перо ${name}`} className={`flex-1 ${color}`} />)}
        </div>
        <section className="mt-[3px] h-[303px] border border-[#b4b4b4] px-[2px] pt-[6px]">
          <label className="ml-[2px] flex h-[14px] items-center gap-[6px] leading-[14px]">
            <span className="grid">
              <input type="checkbox" defaultChecked className={`col-start-1 row-start-1 h-3 w-3 appearance-none bg-white ${sunken}`} />
              <svg width="12" height="12" viewBox="0 0 12 12" className="pointer-events-none col-start-1 row-start-1" aria-hidden="true"><path d="m3.500 6 2 2.500L10 3.500" fill="none" stroke="#000" strokeWidth="1.800" /></svg>
            </span>
            Парам. по умолчанию
          </label>
          <div className="mt-[3px] flex flex-col gap-[3px]">
            <Param label="Номер маркера" value="0" spin={false} />
            <Param label="Кол-во Повторов" value="1" />
            <Param label="Скорость(мм/Сек" value="500" />
            <Param label="Мощность%" value="50" />
            <Param label="Частота(KHz)" value="20" />
          </div>
          <div className="mt-[26px] flex flex-col gap-[3px]">
            <Param label="Start TC(мкс)" value="300" />
            <Param label="Laser Off TC(мкс)" value="150" />
            <Param label="End TC(мкс)" value="300" />
            <Param label="Polygon TC(мкс)" value="100" />
          </div>
          <div className="mt-8 flex justify-end gap-1 text-[#a2a2a2]">
            <button type="button" disabled aria-label="Колебание" className={`flex h-[23px] w-8 items-center justify-center ${raised}`}>
              <svg width="28" height="12" viewBox="0 0 28 12" fill="none" stroke="#999" aria-hidden="true"><circle cx="5" cy="6" r="4" /><circle cx="11" cy="6" r="4" /><circle cx="17" cy="6" r="4" /><circle cx="23" cy="6" r="4" /></svg>
            </button>
            <button type="button" disabled className={`h-[23px] w-[70px] whitespace-nowrap ${raised}`}>Доп. парам...</button>
          </div>
        </section>
        <div className="mt-[5px] flex h-5">
          <button type="button" disabled className={`w-[61px] text-[#a2a2a2] ${raised}`}>Имя пар.</button>
          <Field label="Имя параметров" value="Default" className={`flex-1 ${thin}`} />
        </div>
        <button type="button" disabled className={`mt-[2px] block h-[26px] w-full text-[#a2a2a2] ${raised}`}>Библиотека параметров</button>
        <button type="button" disabled className={`block h-[26px] w-full text-[#a2a2a2] ${raised}`}>Сделать по умолчанию</button>
      </div>
    </aside>
  );
}

const MENU = ["Файл", "Редактировать", "Создать", "Изменить", "Вид", "Особые", "Дополнительно", "Помощь"];

export default function App() {
  return (
    <div className={`flex h-screen flex-col overflow-hidden bg-[#efefef] text-[11px] text-[#1a1a1a] ${sans}`}>
      <nav aria-label="Меню" className={`flex h-[17px] shrink-0 gap-[14px] bg-white pl-px text-[11px] leading-[14px] text-[#777] ${ui}`}>
        {MENU.map((m) => <button key={m} type="button" className="self-start">{m}</button>)}
      </nav>
      <MainToolbar />
      <main className="flex min-h-0 flex-1">
        <LeftPanel />
        <div className="w-[4px] shrink-0" />
        <ToolColumn />
        <div className="flex min-w-0 flex-1 flex-col">
          <ObjectToolbar />
          <div className="relative mr-1 flex min-h-0 flex-1 flex-col border-t-2 border-l-2 border-[#888] border-r border-b border-r-[#fafafa] border-b-[#fafafa]">
            <div className="flex min-h-0 flex-1">
              <Canvas />
              <div className="flex w-4 shrink-0 items-center justify-center"><div className="h-4 w-[2px] bg-[#8a8a8a]" /></div>
            </div>
            <div className="flex h-4 shrink-0 items-center justify-center pr-[17px]"><div className="h-[2px] w-[17px] bg-[#8a8a8a]" /></div>
            <Dialogs />
          </div>
          <MarkPanel />
        </div>
        <RightPanel />
      </main>
      <footer className={`flex h-[21px] shrink-0 items-center gap-[2px] border-t-2 border-[#c0c0c0] text-[11px] leading-4 ${ui}`}>
        <span className="flex-1">Не выделен ни один объект</span>
        <span className={`h-[17px] w-[104px] pl-1 ${thin}`}>61.344,-11.366</span>
        {["Сетка:Выкл", "Вспом.линии", "Объект:Выкл"].map((s) => (
          <span key={s} className={`h-[17px] w-[55px] overflow-hidden pl-px whitespace-nowrap ${thin}`}>{s}</span>
        ))}
      </footer>
    </div>
  );
}
